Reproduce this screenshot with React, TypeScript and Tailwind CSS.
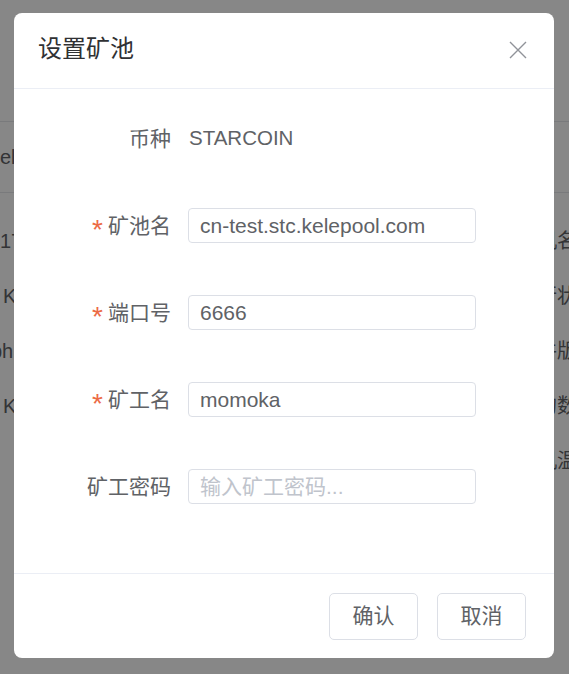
import React from "react";

const font = "font-['Liberation_Sans','Noto_Sans_CJK_SC',sans-serif]";

function Row({ label, required, children }: { label: string; required?: boolean; children: React.ReactNode }) {
  return (
    <div className="flex items-center h-[35px]">
      <div className="w-[157px] shrink-0 flex justify-end items-center text-[21px] text-[#606266]">
        {required && (
          <span className="text-[#ec6a45] mr-[5px] text-[28px] leading-none translate-y-[4px]">*</span>
        )}
        <span>{label}</span>
      </div>
      <div className="ml-[17px] flex items-center">{children}</div>
    </div>
  );
}

function Field({ value, placeholder }: { value?: string; placeholder?: string }) {
  return (
    <input
      readOnly
      value={value ?? ""}
      placeholder={placeholder}
      className={`${font} w-[288px] h-[35px] rounded-[4px] border-[1.5px] border-[#dcdfe6] bg-white px-[11px] text-[21px] text-[#606266] placeholder:text-[#c0c4cc] outline-none`}
    />
  );
}

export default function App() {
  const bgRows: { l: React.ReactNode; r: string }[] = [
    { l: <span>17</span>, r: "机名称" },
    { l: <span className="ml-[3px]">K</span>, r: "行状态" },
    { l: <span className="-ml-[9px]">ph</span>, r: "件版本" },
    { l: <span className="ml-[3px]">K</span>, r: "的数量" },
    { l: <span></span>, r: "机温度" },
  ];
  return (
    <div className={`${font} relative w-full h-[674px] overflow-hidden bg-white`}>
      {/* background page */}
      <div className="flex flex-col w-full text-[20px] text-[#606266]">
        <div className="h-[122px] border-b border-[#e4e6ea]" />
        <div className="h-[71px] border-b border-[#e4e6ea] flex items-center">
          <span>el</span>
        </div>
        <div className="pt-[20px] flex flex-col">
          {bgRows.map((row, i) => (
            <div key={i} className="h-[55px] flex items-center justify-between">
              {row.l}
              <span className="-mr-[28px] whitespace-nowrap">{row.r}</span>
            </div>
          ))}
        </div>
      </div>

      {/* overlay */}
      <div className="absolute inset-0 bg-black/[0.47] flex items-start pl-[14px] pt-[13px]">
        <div className="w-[540px] h-[645px] bg-white rounded-[8px] flex flex-col overflow-hidden">
          {/* header */}
          <div className="h-[76px] shrink-0 border-b border-[#ebeef5] flex items-center justify-between pl-[24px] pr-[27px] pb-[3px]">
            <span className="text-[24px] text-[#303133]">设置矿池</span>
            <svg width="18" height="18" viewBox="0 0 18 18" className="mt-[1px]">
              <path d="M1 1 L17 17 M17 1 L1 17" stroke="#909399" strokeWidth="1.4" fill="none" />
            </svg>
          </div>
          {/* body */}
          <div className="flex-1 flex flex-col gap-[52px] pt-[32px]">
            <Row label="币种">
              <span className="text-[20.5px] text-[#606266] pl-px">STARCOIN</span>
            </Row>
            <Row label="矿池名" required>
              <Field value="cn-test.stc.kelepool.com" />
            </Row>
            <Row label="端口号" required>
              <Field value="6666" />
            </Row>
            <Row label="矿工名" required>
              <Field value="momoka" />
            </Row>
            <Row label="矿工密码">
              <Field placeholder="输入矿工密码..." />
            </Row>
          </div>
          {/* footer */}
          <div className="h-[85px] shrink-0 border-t border-[#ebeef5] flex items-center justify-end gap-[19px] pr-[28px]">
            <button className="w-[89px] h-[47px] rounded-[5px] border-[1.5px] border-[#dcdfe6] bg-white text-[21px] text-[#606266]">
              确认
            </button>
            <button className="w-[89px] h-[47px] rounded-[5px] border-[1.5px] border-[#dcdfe6] bg-white text-[21px] text-[#606266]">
              取消
            </button>
          </div>
        </div>
      </div>
    </div>
  );
}
